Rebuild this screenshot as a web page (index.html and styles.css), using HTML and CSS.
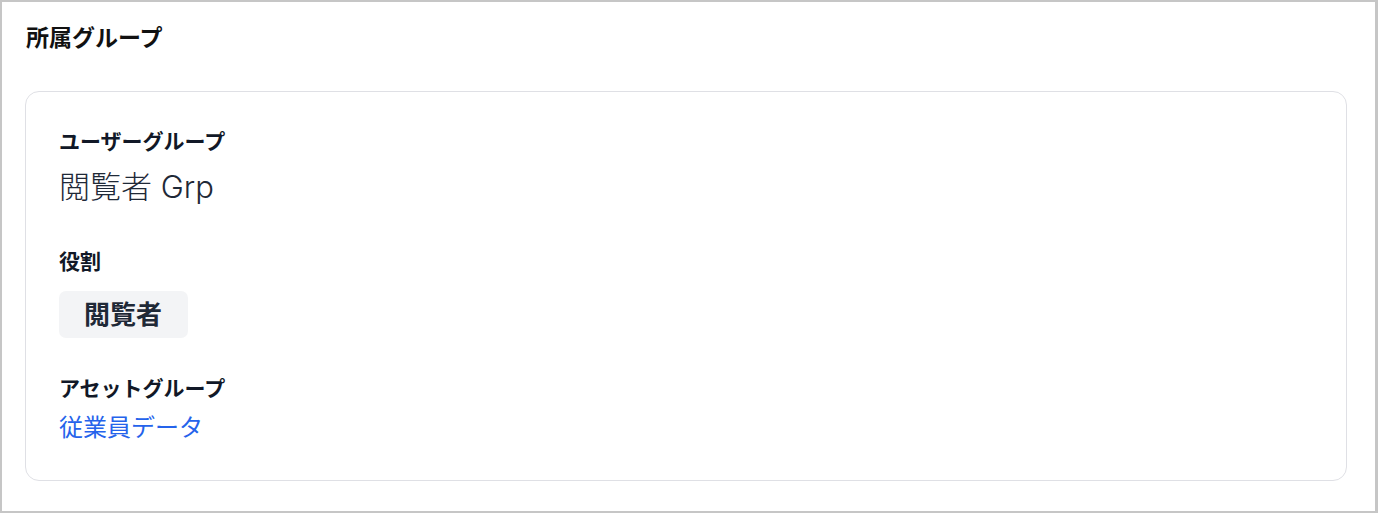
FILE: index.html
```html
<!DOCTYPE html>
<html lang="ja">
<head>
    <meta charset="UTF-8">
    <meta name="viewport" content="width=device-width, initial-scale=1.0">
    <title>所属グループ</title>
    <link rel="stylesheet" href="styles.css">
</head>
<body>
    <div class="panel">
        <h2 class="panel-title">所属グループ</h2>

        <div class="card">
            <div class="field">
                <div class="label">ユーザーグループ</div>
                <div class="value value-lg">閲覧者 Grp</div>
            </div>

            <div class="field field-role">
                <div class="label">役割</div>
                <div><span class="badge">閲覧者</span></div>
            </div>

            <div class="field field-asset">
                <div class="label">アセットグループ</div>
                <a class="value link" href="#">従業員データ</a>
            </div>
        </div>
    </div>
</body>
</html>
```

FILE: styles.css
```css
* { box-sizing: border-box; }
body { margin: 0; background: #fff; font-family: "Inter", "Noto Sans CJK JP", sans-serif; color: #1f2937; }
.panel { width: 1378px; height: 513px; border: 2px solid #c6c6c6; border-right-width: 3px; padding: 21px 28px 0 23px; background: #fff; }
.panel-title { margin: 0 0 38px 1px; font-size: 23px; line-height: 30px; font-weight: 700; color: #111; }
.card { border: 1px solid #dfe0e5; border-radius: 14px; padding: 35px 33px 36px; }
.field { display: flex; flex-direction: column; align-items: flex-start; gap: 10px; }
.field-role { margin-top: 40px; gap: 14px; }
.field-asset { margin-top: 36px; gap: 8px; }
.label { font-size: 21px; line-height: 30px; font-weight: 700; color: #111827; }
.value { font-size: 24px; line-height: 32px; color: #1f2937; }
.value-lg { font-size: 31px; line-height: 40px; font-weight: 300; }
.link { color: #2563eb; text-decoration: none; }
.badge { display: inline-block; background: #f3f4f6; border-radius: 7px; padding: 7px 26px 7px 25px; font-size: 26px; line-height: 33px; font-weight: 700; color: #1f2937; }
```
